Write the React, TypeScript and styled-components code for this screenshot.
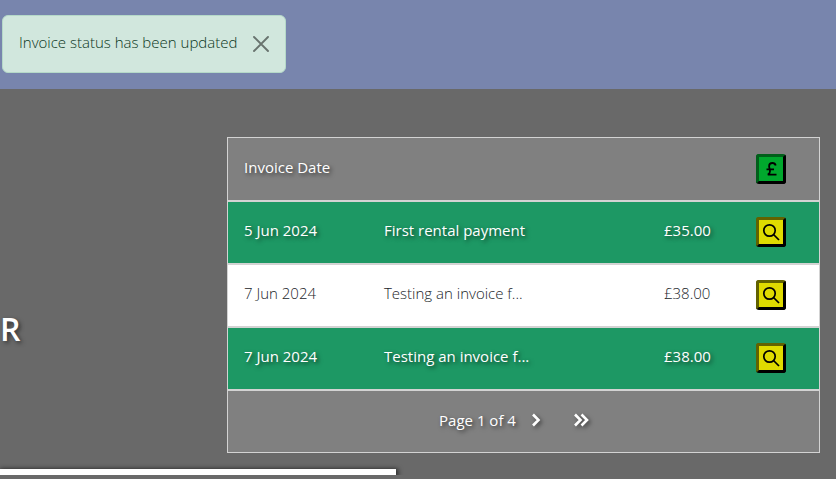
import React from "react";
import styled, { createGlobalStyle } from "styled-components";

const GlobalStyle = createGlobalStyle`
  *, *::before, *::after { box-sizing: border-box; }
  body {
    margin: 0;
    background: #696969;
    color: #212529;
    font-family: "Open Sans", "Noto Sans", sans-serif;
    font-size: 15px;
    font-weight: 300;
    line-height: 24px;
    overflow: hidden;
  }
`;

const TopBar = styled.header`
  display: flex;
  align-items: flex-start;
  padding: 15px 2px 16px;
  background: #7885ad;
`;

const Alert = styled.div`
  display: flex;
  align-items: center;
  gap: 16px;
  padding: 16px;
  border: 1px solid #b5d9c8;
  border-radius: 6px;
  background: #d1e7dd;
  color: #0a3622;
`;

const AlertText = styled.p`
  margin: 0;
  padding-bottom: 4px;
  line-height: 20px;
  white-space: nowrap;
`;

const CloseButton = styled.button`
  display: flex;
  padding: 0;
  border: 0;
  background: none;
  color: #68736e;
`;

const Main = styled.main`
  padding-top: 48px;
`;

const Content = styled.div`
  display: flex;
  align-items: flex-start;
  padding-right: 16px;
`;

const Title = styled.h1`
  flex: 0 0 227px;
  margin: 0;
  padding-top: 172px;
  color: #fff;
  font-size: 32px;
  font-weight: 600;
  line-height: 40px;
  text-shadow: 2px 2px 4px #333;
`;

const Table = styled.table`
  flex: 1;
  table-layout: fixed;
  border-collapse: separate;
  border-spacing: 0;
  border: solid #d3d3d3;
  border-width: 0 1px;
`;

type Tone = "head" | "paid" | "plain";

const tones: Record<Tone, string> = {
  head: "#808080",
  paid: "#1d9864",
  plain: "#ffffff",
};

const Row = styled.tr<{ $tone: Tone }>`
  background: ${(p) => tones[p.$tone]};
  color: ${(p) => (p.$tone === "plain" ? "#212529" : "#ffffff")};
  font-weight: ${(p) => (p.$tone === "plain" ? 300 : 400)};
  text-shadow: ${(p) => (p.$tone === "plain" ? "none" : "2px 2px 4px rgba(0, 0, 0, 0.6)")};
`;

const Cell = styled.td`
  padding: 15px 16px 16px;
  border: solid #d3d3d3;
  border-width: 1px 0;
  text-align: left;
  vertical-align: top;
  white-space: nowrap;
`;

const HeadCell = styled(Cell).attrs({ as: "th" })`
  padding-top: 16px;
  font-weight: inherit;
`;

const Label = styled.span`
  display: block;
  line-height: 26px;
`;

const DateColumn = styled.col`
  width: 140px;
`;

const TextColumn = styled.col``;

const AmountColumn = styled.col`
  width: 92px;
`;

const ActionColumn = styled.col`
  width: 79px;
`;

const IconButton = styled.button<{ $pay?: boolean }>`
  display: flex;
  align-items: center;
  justify-content: center;
  width: 30px;
  height: 30px;
  padding: 0;
  border: 3px solid;
  border-color: ${(p) =>
    p.$pay ? "#005f1a #000 #000 #005f1a" : "#626200 #000 #000 #626200"};
  border-radius: 3px;
  background: ${(p) => (p.$pay ? "#00a82d" : "#dfdb00")};
  color: #000;
`;

const Pager = styled.nav`
  display: flex;
  align-items: center;
  justify-content: center;
  gap: 15px;
  height: 28px;
  margin-bottom: 2px;
  padding-right: 12px;
`;

const PageButton = styled.button`
  display: flex;
  justify-content: center;
  padding: 0;
  width: 30px;
  border: 0;
  background: none;
  color: #fff;
  filter: drop-shadow(2px 2px 2px rgba(0, 0, 0, 0.5));
`;

const PageStatus = styled.span`
  margin-right: -10px;
`;

const Divider = styled.hr`
  width: 396px;
  height: 6px;
  margin: 16px 0 0;
  border: 0;
  background: #fff;
  box-shadow: 1px 1px 5px 1px rgba(0, 0, 0, 0.7);
`;

const SearchIcon = () => (
  <svg width="18" height="18" viewBox="0 0 18 18" fill="none" stroke="currentColor" strokeWidth="1.7" aria-hidden="true">
    <circle cx="7.500" cy="7.500" r="5.700" />
    <path d="M11.500 11.500L17 17" />
  </svg>
);

const PoundIcon = () => (
  <svg width="16" height="16" viewBox="0 0 16 16" fill="none" stroke="currentColor" strokeWidth="1.8" aria-hidden="true">
    <path d="M12.700 4.600C12.200 2.700 11.100 2 9.500 2 7.400 2 6.100 3.300 6.100 5.200c0 1.700 .9 3.100 .9 5.100 0 1.500-.9 2.700-2.200 3.300h8.700M3.500 8.300h7.500" />
  </svg>
);

const invoices = [
  { date: "5 Jun 2024", text: "First rental payment", amount: "£35.00", paid: true },
  { date: "7 Jun 2024", text: "Testing an invoice f...", amount: "£38.00", paid: false },
  { date: "7 Jun 2024", text: "Testing an invoice f...", amount: "£38.00", paid: true },
];

export default function App() {
  return (
    <>
      <GlobalStyle />
      <TopBar>
        <Alert role="alert">
          <AlertText>Invoice status has been updated</AlertText>
          <CloseButton type="button" aria-label="Close">
            <svg width="16" height="16" viewBox="0 0 16 16" fill="none" stroke="currentColor" strokeWidth="1.9" strokeLinecap="round">
              <path d="M1 1l14 14M15 1L1 15" />
            </svg>
          </CloseButton>
        </Alert>
      </TopBar>
      <Main>
        <Content>
          <Title>R</Title>
          <Table>
            <colgroup>
              <DateColumn />
              <TextColumn />
              <AmountColumn />
              <ActionColumn />
            </colgroup>
            <thead>
              <Row $tone="head">
                <HeadCell colSpan={3} scope="col">
                  <Label>Invoice Date</Label>
                </HeadCell>
                <HeadCell>
                  <IconButton $pay type="button" aria-label="Payments">
                    <PoundIcon />
                  </IconButton>
                </HeadCell>
              </Row>
            </thead>
            <tbody>
              {invoices.map((invoice, index) => (
                <Row key={index} $tone={invoice.paid ? "paid" : "plain"}>
                  <Cell><Label>{invoice.date}</Label></Cell>
                  <Cell><Label>{invoice.text}</Label></Cell>
                  <Cell><Label>{invoice.amount}</Label></Cell>
                  <Cell>
                    <IconButton type="button" aria-label="View invoice">
                      <SearchIcon />
                    </IconButton>
                  </Cell>
                </Row>
              ))}
            </tbody>
            <tfoot>
              <Row $tone="head">
                <Cell colSpan={4}>
                  <Pager aria-label="Invoice pages">
                    <PageStatus>Page 1 of 4</PageStatus>
                    <PageButton type="button" aria-label="Next page">
                      <svg width="10" height="14" viewBox="0 0 10 14" fill="none" stroke="currentColor" strokeWidth="2.6">
                        <path d="M2 1.5L7.5 7 2 12.5" />
                      </svg>
                    </PageButton>
                    <PageButton type="button" aria-label="Last page">
                      <svg width="16" height="14" viewBox="0 0 16 14" fill="none" stroke="currentColor" strokeWidth="2.6">
                        <path d="M2 1.5L7.5 7 2 12.5M8.5 1.5L14 7l-5.500 5.500" />
                      </svg>
                    </PageButton>
                  </Pager>
                </Cell>
              </Row>
            </tfoot>
          </Table>
        </Content>
        <Divider />
      </Main>
    </>
  );
}
